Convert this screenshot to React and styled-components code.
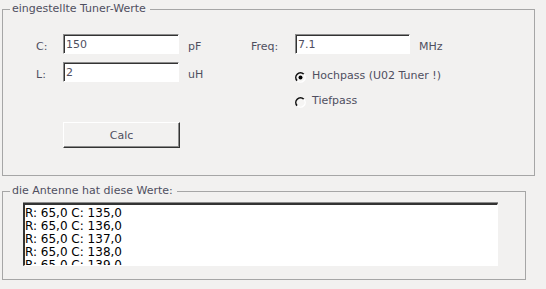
import styled, { createGlobalStyle } from 'styled-components';

const GlobalStyle = createGlobalStyle`
  html, body {
    margin: 0;
    padding: 0;
    background: #f2f1f0;
  }
  body {
    font-family: "DejaVu Sans", "Liberation Sans", sans-serif;
    font-size: 11px;
    color: #4f4f5f;
  }
`;

const Page = styled.div`
  width: 546px;
  height: 289px;
  padding: 2px 0 0 2px;
  box-sizing: border-box;
  background: #f2f1f0;
`;

const Group = styled.fieldset`
  box-sizing: border-box;
  width: ${(p) => p.$width}px;
  height: ${(p) => p.$height}px;
  margin: 0 0 ${(p) => p.$gap || 0}px 0;
  padding: 0;
  min-inline-size: 0;
  border: 1px solid #a6a6a6;
`;

const Legend = styled.legend`
  margin-left: 7px;
  padding: 0 4px 0 2px;
  font-size: 11px;
  line-height: 14px;
  color: #4f4f5f;
`;

const TunerBody = styled.div`
  display: flex;
  padding: 18px 0 0 33px;
`;

const Column = styled.div`
  display: flex;
  flex-direction: column;
  width: ${(p) => p.$width || 'auto'};
`;

const FieldRow = styled.div`
  display: flex;
  align-items: flex-start;
  margin-top: ${(p) => p.$top || 0}px;
  height: 20px;
`;

const Label = styled.span`
  width: ${(p) => p.$width}px;
  margin-top: 6px;
  line-height: 14px;
  white-space: nowrap;
`;

const Unit = styled.span`
  margin: 6px 0 0 9px;
  line-height: 14px;
  white-space: nowrap;
`;

const Input = styled.input`
  box-sizing: border-box;
  width: ${(p) => p.$width}px;
  height: 20px;
  margin: 0;
  padding: 0 0 0 2px;
  border: 1px solid;
  border-color: #8c8c8c #fff #fff #8c8c8c;
  box-shadow: inset 1px 1px 0 #333;
  background: #fff;
  font-family: "DejaVu Sans", "Liberation Sans", sans-serif;
  font-size: 11px;
  color: #4f4f5f;
  outline: none;
`;

const Button = styled.button`
  box-sizing: border-box;
  width: 117px;
  height: 26px;
  margin: 40px 0 0 27px;
  padding: 0;
  border: 1px solid;
  border-color: #fff #333 #333 #fff;
  box-shadow: inset -1px -1px 0 #8c8c8c;
  background: #f2f1f0;
  font-family: "DejaVu Sans", "Liberation Sans", sans-serif;
  font-size: 11px;
  color: #4f4f5f;
`;

const RadioRow = styled.label`
  display: flex;
  align-items: flex-start;
  gap: 6px;
  margin: ${(p) => p.$top}px 0 0 44px;
  line-height: 14px;
  white-space: nowrap;
`;

const RadioMark = styled.svg`
  flex: none;
  margin-top: 3px;
`;

const Radio = ({ checked }) => (
  <RadioMark width="11" height="11" viewBox="0 0 11 11">
    <circle cx="5.5" cy="5.5" r="4.6" fill="#f6f5f4" />
    <path d="M2.2 8.8 A4.6 4.6 0 0 1 8.8 2.2" fill="none" stroke="#111" strokeWidth="1.6" />
    <path d="M8.8 2.2 A4.6 4.6 0 0 1 2.2 8.8" fill="none" stroke="#fff" strokeWidth="1.4" />
    {checked && <circle cx="5.5" cy="5.5" r="2" fill="#000" />}
  </RadioMark>
);

const ListBox = styled.div`
  box-sizing: border-box;
  width: 475px;
  height: 63px;
  margin: 5px 0 0 20px;
  overflow: hidden;
  background: #fff;
  border-style: solid;
  border-width: 2px 1px 1px 2px;
  border-color: #333 #fff #fff #333;
  box-shadow: 0 -1px 0 #8c8c8c;
`;

// list is scrolled a little, so the row above peeks in at the top
const ListInner = styled.div`
  margin-top: -11px;
`;

const ListItem = styled.div`
  font-size: 12px;
  line-height: 13px;
  color: #000;
  white-space: nowrap;
`;

const values = [134, 135, 136, 137, 138, 139];

export default function App() {
  return (
    <Page>
      <GlobalStyle />
      <Group $width={533} $height={174} $gap={8}>
        <Legend>eingestellte Tuner-Werte</Legend>
        <TunerBody>
          <Column $width="215px">
            <FieldRow>
              <Label $width={27}>C:</Label>
              <Input $width={116} defaultValue="150" />
              <Unit>pF</Unit>
            </FieldRow>
            <FieldRow $top={8}>
              <Label $width={27}>L:</Label>
              <Input $width={116} defaultValue="2" />
              <Unit>uH</Unit>
            </FieldRow>
            <Button>Calc</Button>
          </Column>
          <Column>
            <FieldRow>
              <Label $width={44}>Freq:</Label>
              <Input $width={115} defaultValue="7.1" />
              <Unit>MHz</Unit>
            </FieldRow>
            <RadioRow $top={15}>
              <Radio checked />
              Hochpass (U02 Tuner !)
            </RadioRow>
            <RadioRow $top={11}>
              <Radio />
              Tiefpass
            </RadioRow>
          </Column>
        </TunerBody>
      </Group>
      <Group $width={524} $height={96}>
        <Legend>die Antenne hat diese Werte:</Legend>
        <ListBox>
          <ListInner>
            {values.map((c) => (
              <ListItem key={c}>R: 65,0 C: {c},0</ListItem>
            ))}
          </ListInner>
        </ListBox>
      </Group>
    </Page>
  );
}
